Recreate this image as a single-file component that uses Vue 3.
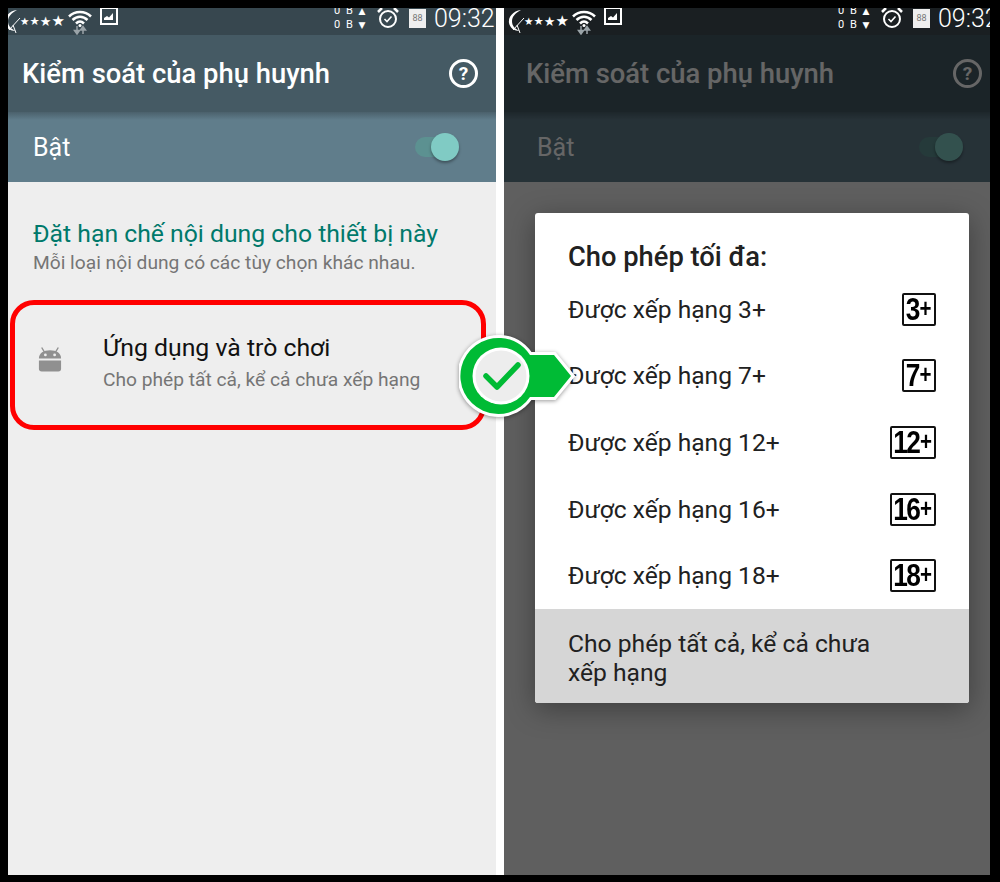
<template>
  <div class="page">
    <section v-for="screen in screens" :key="screen" class="phone" :class="screen">
      <!-- Thanh trạng thái -->
      <div class="status">
        <svg class="moon" width="20" height="26" viewBox="0 0 20 26">
          <path d="M14 1C6 2 1 8 2 14c1 5 5 8 11 8-5-2-8-5-8-10 0-4 3-8 9-11z" fill="#fff" />
          <path d="M6 21 17 9M10 16l3 8" stroke="#fff" stroke-width="1" fill="none" />
        </svg>
        <div class="stars">
          <span class="s1">★</span><span class="s2">★</span><span class="s3">★</span><span class="s4">★</span>
        </div>
        <svg class="wifi" width="24" height="26" viewBox="0 0 24 26">
          <path d="M1 7.500C7 1.500 17 1.500 23 7.500M4.500 11C9 6.500 15 6.500 19.500 11M8 14.500c2.500-2.500 5.500-2.500 8 0" stroke="#fff" stroke-width="2.500" fill="none" />
          <circle cx="12" cy="16.500" r="1.500" fill="#fff" />
          <path d="M9 17v7M6.500 21.500 9 25l2.500-3.500zM15 25v-7M12.500 21l2.500-3.500 2.500 3.500z" stroke="#9aa3a8" stroke-width="1.500" fill="#9aa3a8" />
        </svg>
        <svg class="pic" width="18" height="18" viewBox="0 0 18 18">
          <rect x="1" y="1" width="16" height="16" fill="none" stroke="#fff" stroke-width="2" />
          <path d="M4 13v-2l3-2 2 1.500L13 6v7z" fill="#fff" />
        </svg>
        <div class="spacer"></div>
        <div class="speed">
          <div>0 B <i>▲</i></div>
          <div>0 B <i>▼</i></div>
        </div>
        <svg class="alarm" width="22" height="24" viewBox="0 0 22 24">
          <circle cx="11" cy="13" r="8" fill="none" stroke="#fff" stroke-width="2" />
          <path d="M7.500 13l2.500 2.500 4.500-5" fill="none" stroke="#fff" stroke-width="1.600" />
          <path d="M1 6l4-4M21 6l-4-4" stroke="#fff" stroke-width="2.500" />
        </svg>
        <div class="cal">88</div>
        <div class="time">09:32</div>
      </div>

      <div class="body">
        <header class="appbar">
          <h1>Kiểm soát của phụ huynh</h1>
          <div class="help">?</div>
        </header>
        <div class="subbar">
          <span>Bật</span>
          <div class="toggle"><div class="thumb"></div></div>
        </div>

        <main class="content">
          <template v-if="screen === 'list'">
            <h2>Đặt hạn chế nội dung cho thiết bị này</h2>
            <p class="hint">Mỗi loại nội dung có các tùy chọn khác nhau.</p>
            <div class="item">
              <svg class="android" width="24" height="27" viewBox="0 0 26 28">
                <path d="M1 13C1 7 6 4 13 4s12 3 12 9z" fill="#909090" />
                <path d="M7 6 4 1M19 6l3-5" stroke="#909090" stroke-width="1.500" />
                <circle cx="8" cy="9" r="1.500" fill="#eee" />
                <circle cx="18" cy="9" r="1.500" fill="#eee" />
                <path d="M1 15h24v9a3 3 0 0 1-3 3H4a3 3 0 0 1-3-3z" fill="#909090" />
              </svg>
              <div>
                <div class="item-title">Ứng dụng và trò chơi</div>
                <div class="item-sub">Cho phép tất cả, kể cả chưa xếp hạng</div>
              </div>
            </div>
          </template>

          <div v-else class="dialog">
            <div class="dialog-title">Cho phép tối đa:</div>
            <div v-for="rate in ratings" :key="rate" class="row">
              <span>Được xếp hạng {{ rate }}+</span>
              <span class="rating" :class="{ wide: rate > 9 }">
                <span class="rating-text">{{ rate }}<small>+</small></span>
              </span>
            </div>
            <div class="row-all">Cho phép tất cả, kể cả chưa xếp hạng</div>
          </div>
        </main>

        <div v-if="screen === 'picker'" class="scrim"></div>
      </div>
    </section>

    <!-- Dấu chuyển bước -->
    <svg class="step" width="118" height="86" viewBox="0 0 118 86">
      <path d="M42 3a40 40 0 0 1 30 17h24l19 23-19 23H72A40 40 0 1 1 42 3z" fill="#fff" stroke="#fff" stroke-width="2" />
      <path d="M42 5a38 38 0 0 1 29 17h24l17 21-17 21H71A38 38 0 1 1 42 5z" fill="#00bb35" />
      <circle cx="42" cy="43" r="28.500" fill="#fff" />
      <circle cx="42" cy="43" r="25.500" fill="#ededed" />
      <path d="M27 43l11 11 21-22" fill="none" stroke="#00bb35" stroke-width="5.500" stroke-linecap="round" stroke-linejoin="round" />
    </svg>

    <!-- Viền đen của ảnh -->
    <div class="frame"></div>
  </div>
</template>

<script setup>
const screens = ['list', 'picker'];
const ratings = [3, 7, 12, 16, 18];
</script>

<style scoped>
.page {
  position: relative;
  display: flex;
  gap: 8px;
  width: 1000px;
  height: 882px;
  overflow: hidden;
  background: #fff;
  font-family: Roboto, "Noto Sans", sans-serif;
}

.phone {
  display: flex;
  flex-direction: column;
  flex: none;
  width: 496px;
  height: 882px;
}

.status {
  display: flex;
  align-items: center;
  flex: none;
  box-sizing: border-box;
  height: 27px;
  margin-top: 8px;
  padding-bottom: 7px;
  background: #37474f;
  color: #fff;
}

.picker .status {
  background: #1a1f22;
}

.moon {
  flex: none;
  margin-top: 7px;
  margin-left: 3px;
}

.stars {
  display: flex;
  flex: none;
  align-items: center;
  width: 45px;
  margin-top: 7px;
  margin-left: -3px;
  font-family: "DejaVu Sans", sans-serif;
  line-height: 1;
}

.s1 { font-size: 10.500px; }
.s2 { font-size: 11.500px; }
.s3 { font-size: 13px; }
.s4 { font-size: 15px; }

.wifi {
  flex: none;
  margin-top: 7px;
  margin-left: 3px;
}

.pic {
  flex: none;
  margin-top: -4px;
  margin-left: 8px;
}

.spacer {
  flex: 1;
}

.speed {
  width: 32px;
  margin-top: -1px;
  font-size: 11px;
  line-height: 13px;
  letter-spacing: 1.500px;
  white-space: nowrap;
}

.speed i {
  font-family: "DejaVu Sans", sans-serif;
  font-size: 9px;
  font-style: normal;
}

.alarm {
  flex: none;
  margin-left: 11px;
}

.cal {
  flex: none;
  width: 17px;
  height: 19px;
  margin-left: 10px;
  background: #eee;
  color: #777;
  font-size: 9px;
  line-height: 19px;
  text-align: center;
}

.time {
  width: 62px;
  margin-left: 8px;
  font-size: 25px;
  font-weight: 300;
  white-space: nowrap;
}

.body {
  position: relative;
  display: flex;
  flex: 1;
  flex-direction: column;
}

.appbar {
  display: flex;
  align-items: center;
  justify-content: space-between;
  flex: none;
  height: 77px;
  padding: 0 18px 0 22px;
  background: #455a64;
  color: #fff;
}

.appbar h1 {
  margin: 0;
  font-size: 27.400px;
  font-weight: 500;
}

.help {
  width: 23px;
  height: 23px;
  border: 3px solid #fff;
  border-radius: 50%;
  font-size: 19px;
  font-weight: 700;
  line-height: 23px;
  text-align: center;
}

.subbar {
  display: flex;
  align-items: center;
  justify-content: space-between;
  flex: none;
  height: 70px;
  padding: 0 47px 0 33px;
  background: linear-gradient(#4b616c, #607d8b 8px);
  color: #fff;
  font-size: 25px;
}

.toggle {
  position: relative;
  width: 34px;
  height: 20px;
  border-radius: 10px;
  background: #5c9191;
}

.thumb {
  position: absolute;
  top: -4px;
  right: -10px;
  width: 28px;
  height: 28px;
  border-radius: 50%;
  background: #80cbc4;
  box-shadow: 0 2px 3px rgba(0, 0, 0, 0.35);
}

.content {
  flex: 1;
  padding: 35px 10px 0;
  background: #eee;
}

.content h2 {
  margin: 0 0 0 23px;
  color: #00796b;
  font-size: 24.750px;
  font-weight: 400;
  line-height: 34px;
}

.hint {
  margin: 0 0 0 23px;
  color: #757575;
  font-size: 19.200px;
  line-height: 24px;
}

.item {
  display: flex;
  align-items: center;
  gap: 41px;
  box-sizing: border-box;
  width: 476px;
  height: 130px;
  margin-top: 25px;
  padding: 0 0 6px 23px;
  border: 5px solid #f00;
  border-radius: 24px;
}

.android {
  flex: none;
  margin-top: -6px;
}

.item-title {
  color: #111;
  font-size: 24.800px;
  line-height: 34px;
}

.item-sub {
  margin-top: 2px;
  color: #757575;
  font-size: 19.200px;
  line-height: 26px;
}

.picker .content {
  padding: 31px 0 0 31px;
}

.dialog {
  position: relative;
  z-index: 2;
  width: 434px;
  border-radius: 3px;
  background: #fff;
  box-shadow: 0 6px 28px rgba(0, 0, 0, 0.35);
  color: #212121;
  overflow: hidden;
}

.dialog-title {
  height: 63px;
  padding-left: 33px;
  font-size: 27.300px;
  font-weight: 500;
  line-height: 88px;
}

.row {
  display: flex;
  align-items: center;
  justify-content: space-between;
  height: 66.600px;
  padding: 0 33px;
  font-size: 24.600px;
}

.rating {
  display: flex;
  align-items: center;
  justify-content: center;
  box-sizing: border-box;
  width: 34px;
  height: 33px;
  border: 2px solid #111;
  border-radius: 2px;
  color: #000;
  font-family: "Liberation Sans", sans-serif;
  font-size: 32px;
  font-weight: 700;
  letter-spacing: -2px;
}

.rating.wide {
  width: 46px;
}

.rating-text {
  display: inline-block;
  white-space: nowrap;
  transform: scaleX(0.82);
}

.rating small {
  margin-left: 1px;
  font-size: 25px;
  letter-spacing: 0;
  vertical-align: 3px;
}

.row-all {
  box-sizing: border-box;
  height: 94px;
  padding: 20px 90px 0 33px;
  background: #d6d6d6;
  font-size: 24.650px;
  line-height: 29px;
}

.scrim {
  position: absolute;
  inset: 0;
  z-index: 1;
  background: rgba(0, 0, 0, 0.6);
}

.step {
  position: absolute;
  top: 333px;
  left: 459px;
  z-index: 3;
  filter: drop-shadow(0 1px 2px rgba(0, 0, 0, 0.4));
}

.frame {
  position: absolute;
  inset: 0;
  z-index: 4;
  border-style: solid;
  border-color: #000;
  border-width: 8px 10px 7px 8px;
  pointer-events: none;
}
</style>
